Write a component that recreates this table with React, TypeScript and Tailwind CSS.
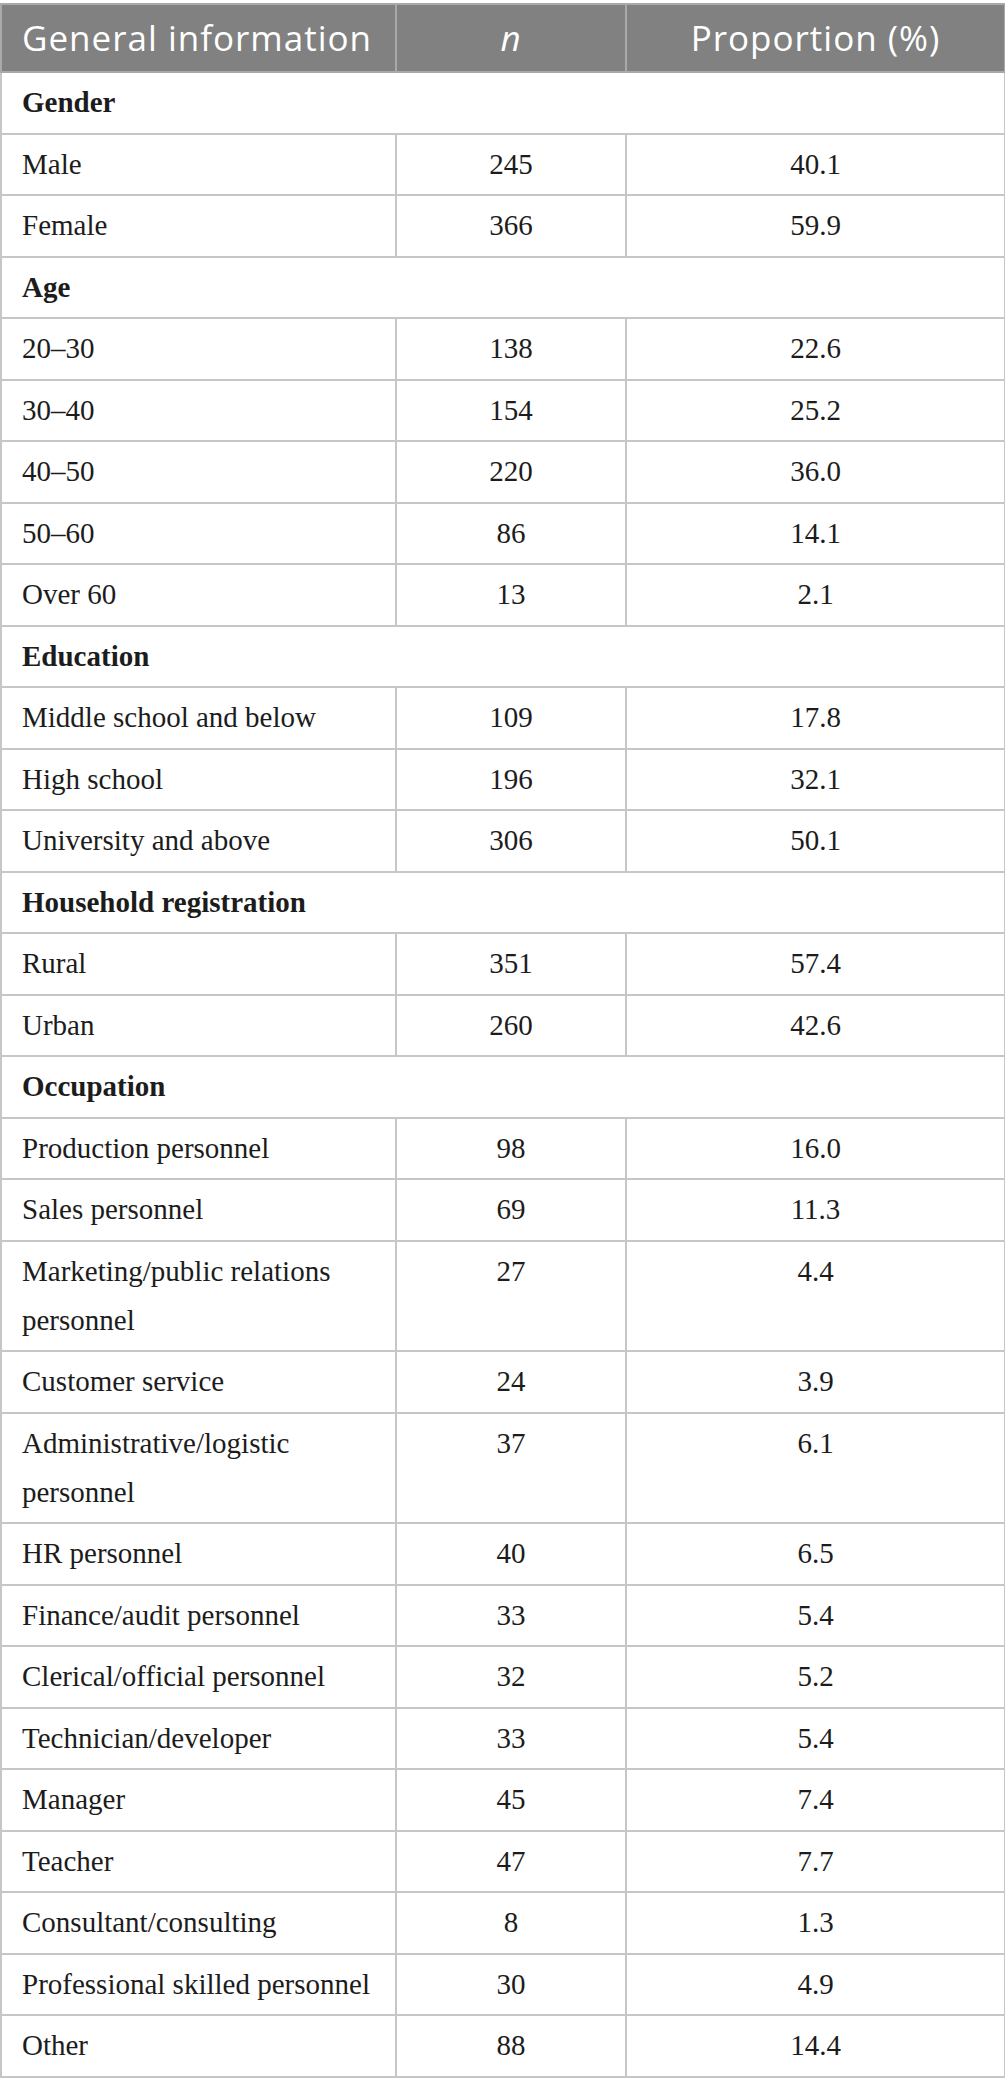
const sections: { title: string; rows: [string, string, string][] }[] = [
  { title: "Gender", rows: [["Male", "245", "40.1"], ["Female", "366", "59.9"]] },
  {
    title: "Age",
    rows: [
      ["20–30", "138", "22.6"],
      ["30–40", "154", "25.2"],
      ["40–50", "220", "36.0"],
      ["50–60", "86", "14.1"],
      ["Over 60", "13", "2.1"],
    ],
  },
  {
    title: "Education",
    rows: [
      ["Middle school and below", "109", "17.8"],
      ["High school", "196", "32.1"],
      ["University and above", "306", "50.1"],
    ],
  },
  { title: "Household registration", rows: [["Rural", "351", "57.4"], ["Urban", "260", "42.6"]] },
  {
    title: "Occupation",
    rows: [
      ["Production personnel", "98", "16.0"],
      ["Sales personnel", "69", "11.3"],
      ["Marketing/public relations personnel", "27", "4.4"],
      ["Customer service", "24", "3.9"],
      ["Administrative/logistic personnel", "37", "6.1"],
      ["HR personnel", "40", "6.5"],
      ["Finance/audit personnel", "33", "5.4"],
      ["Clerical/official personnel", "32", "5.2"],
      ["Technician/developer", "33", "5.4"],
      ["Manager", "45", "7.4"],
      ["Teacher", "47", "7.7"],
      ["Consultant/consulting", "8", "1.3"],
      ["Professional skilled personnel", "30", "4.9"],
      ["Other", "88", "14.4"],
    ],
  },
];

const cell = "border-2 border-[#c6c6c6] px-[20px] py-[5.25px] align-top leading-[49px]";

export default function App() {
  return (
    <div className="min-h-[2091px] bg-white pt-[3px]">
      <table className="w-[1004px] table-fixed border-collapse font-['Liberation_Serif',serif] text-[29px] text-[#1c1c1c]">
        <colgroup>
          <col className="w-[395px]" />
          <col className="w-[230px]" />
          <col className="w-[379px]" />
        </colgroup>
        <thead>
          <tr className="bg-[#808180] font-['Open_Sans',sans-serif] text-[35px] font-normal leading-[40px] tracking-[1px] text-white">
            <th className="h-[68px] whitespace-nowrap border-2 border-[#a9a9a9] pl-[20px] text-left font-normal">
              General information
            </th>
            <th className="whitespace-nowrap border-2 border-[#a9a9a9] text-center font-normal italic">n</th>
            <th className="whitespace-nowrap border-2 border-[#a9a9a9] text-center font-normal">Proportion (%)</th>
          </tr>
        </thead>
        <tbody>
          {sections.map((s) => (
            <>
              <tr key={s.title}>
                <td colSpan={3} className={`${cell} font-bold`}>
                  {s.title}
                </td>
              </tr>
              {s.rows.map(([label, n, pct]) => (
                <tr key={s.title + label}>
                  <td className={cell}>{label}</td>
                  <td className={`${cell} text-center`}>{n}</td>
                  <td className={`${cell} text-center`}>{pct}</td>
                </tr>
              ))}
            </>
          ))}
        </tbody>
      </table>
    </div>
  );
}
